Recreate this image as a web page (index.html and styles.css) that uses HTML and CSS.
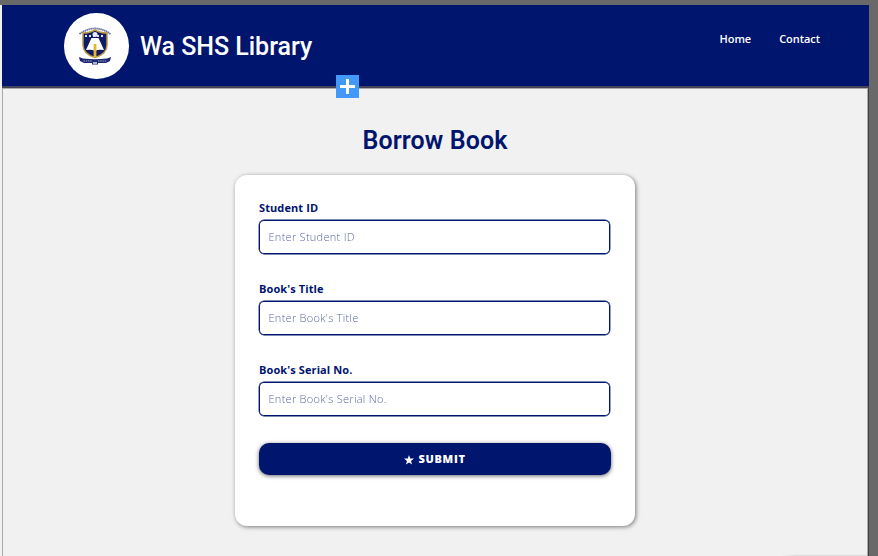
FILE: index.html
```html
<!DOCTYPE html>
<html lang="en">
<head>
<meta charset="utf-8">
<title>Wa SHS Library</title>
<link rel="stylesheet" href="styles.css">
</head>
<body>
<div class="page">
  <header class="header">
    <a class="brand">
      <span class="logo">
        <svg width="34" height="39" viewBox="0 0 34 39">
          <path d="M1.500 8Q17-3 32.500 8" fill="none" stroke="#69719d" stroke-width="1.800" stroke-dasharray="1.500 .5"/>
          <path d="M5 7Q12 7 17 4Q22 7 29 7V19Q29 28 17 31.500Q5 28 5 19Z" fill="#101a66" stroke="#b89a45" stroke-width="1.500"/>
          <path d="M7 10H27" stroke="#dfe2ee" stroke-width="2" stroke-dasharray="2 2"/>
          <circle cx="17" cy="8.500" r="2.500" fill="#e8eaf4"/>
          <path d="M13.500 12H20.500L26 24Q20 23 17 25Q14 23 8 24Z" fill="#fff"/>
          <path d="M17 18V31" stroke="#e4b72d" stroke-width="2.800"/>
          <path d="M1 31L5 32.500Q17 34 29 32.500L33 31L32 35L28 37H20V38.500H14V37H6L2 35Z" fill="#1d2870"/>
          <path d="M5.500 35H14M20 35H28" stroke="#a2a8c8" stroke-width="1.200" stroke-dasharray="1.500 .7"/>
          <path d="M15 37H19" stroke="#dfe2ee" stroke-width="1.500"/>
        </svg>
      </span>
      <span class="brand-name">Wa SHS Library</span>
    </a>
    <nav class="nav"><a>Home</a><a>Contact</a></nav>
    <span class="add-handle"></span>
  </header>
  <main class="content">
    <h1>Borrow Book</h1>
    <form class="card">
      <div class="field">
        <label for="student">Student ID</label>
        <input id="student" placeholder="Enter Student ID">
      </div>
      <div class="field">
        <label for="title">Book's Title</label>
        <input id="title" placeholder="Enter Book's Title">
      </div>
      <div class="field">
        <label for="serial">Book's Serial No.</label>
        <input id="serial" placeholder="Enter Book's Serial No.">
      </div>
      <button type="button" class="submit">
        <svg width="10" height="10" viewBox="0 0 10 10"><path d="M5 0L6.200 3.600H10L7 5.900L8.100 9.600L5 7.400L1.900 9.600L3 5.900L0 3.600H3.800Z" fill="#fff"/></svg>
        <span>SUBMIT</span>
      </button>
    </form>
    <div class="edge-shadow"></div>
  </main>
</div>
</body>
</html>
```
FILE: styles.css
```css
* { box-sizing: border-box; }
body {
  margin: 0;
  height: 556px;
  overflow: hidden;
  background: #696969;
  padding: 5px 9px 0 0;
  font-family: "Open Sans", sans-serif;
}
.page {
  height: 551px;
  display: flex;
  flex-direction: column;
  border-left: 2px solid #f1f1f1;
}
.header {
  position: relative;
  flex: none;
  height: 83px;
  display: flex;
  justify-content: space-between;
  padding: 8px 49px 0 62px;
  background: #00156e;
  border-bottom: 2px solid #414358;
}
.brand { display: flex; height: 66px; align-items: center; gap: 11.5px; }
.logo {
  width: 64.5px;
  height: 65.5px;
  border-radius: 50%;
  background: #fff;
  display: flex;
  align-items: center;
  justify-content: center;
}
.logo svg { display: block; margin: 0 2px 2px 0; }
.brand-name {
  padding-top: 2px;
  font: 500 25px/32px Roboto, sans-serif;
  letter-spacing: -.03px;
  color: #fff;
}
.nav { display: flex; gap: 28px; padding-top: 18px; }
.nav a { font-size: 11px; line-height: 16px; font-weight: 600; letter-spacing: -.05px; color: #fff; }
.add-handle {
  position: absolute;
  left: 334px;
  top: 70px;
  width: 23px;
  height: 23px;
  background:
    linear-gradient(#fff, #fff) center / 15px 3px no-repeat,
    linear-gradient(#fff, #fff) center / 3px 15px no-repeat,
    #4399fa;
}
.content {
  flex: 1;
  display: flex;
  flex-direction: column;
  align-items: center;
  background: #f1f1f1;
  border: solid #aaa;
  border-width: 1px 1px 0;
  margin-right: 1px;
  box-shadow: 1px 0 #414141;
}
h1 {
  margin: 36px 0 18px;
  font: 600 25px/32px Roboto, sans-serif;
  letter-spacing: .12px;
  color: #00156e;
}
.card {
  flex: none;
  width: 400px;
  height: 351px;
  padding: 24px;
  border-radius: 12px;
  background: #fff;
  box-shadow: 1px 1px 4px rgba(0, 0, 0, .5);
}
.field { height: 81px; }
.field label {
  display: block;
  height: 21px;
  font-size: 11px;
  line-height: 17px;
  font-weight: 700;
  letter-spacing: .1px;
  color: #00156e;
}
.field input {
  display: block;
  width: 351px;
  height: 34px;
  padding: 0 9.5px 2px;
  border: 0;
  border-radius: 5px;
  outline: 0;
  background: #fff;
  box-shadow: inset 0 0 0 1px #00156e, 0 0 0 .4px #00156e;
  font: 300 11px "Open Sans", sans-serif;
  letter-spacing: .28px;
}
.field input::placeholder { color: #00156e; opacity: .68; }
.submit {
  display: flex;
  align-items: center;
  justify-content: center;
  gap: 4px;
  width: 352px;
  height: 32px;
  margin-top: 1px;
  padding: 0;
  border: 0;
  border-radius: 10px;
  background: #00156e;
  color: #fff;
  box-shadow: 0 1px 4px rgba(0, 0, 0, .6);
  font: 800 11px/16px "Open Sans", sans-serif;
  letter-spacing: .7px;
}
.submit svg { margin-top: 2px; }
.edge-shadow {
  align-self: flex-end;
  width: 87px;
  height: 2px;
  margin-top: auto;
  background: linear-gradient(90deg, #f1f1f1, #d8d8d8 15px);
  mask-image: linear-gradient(transparent, #000);
}
```
